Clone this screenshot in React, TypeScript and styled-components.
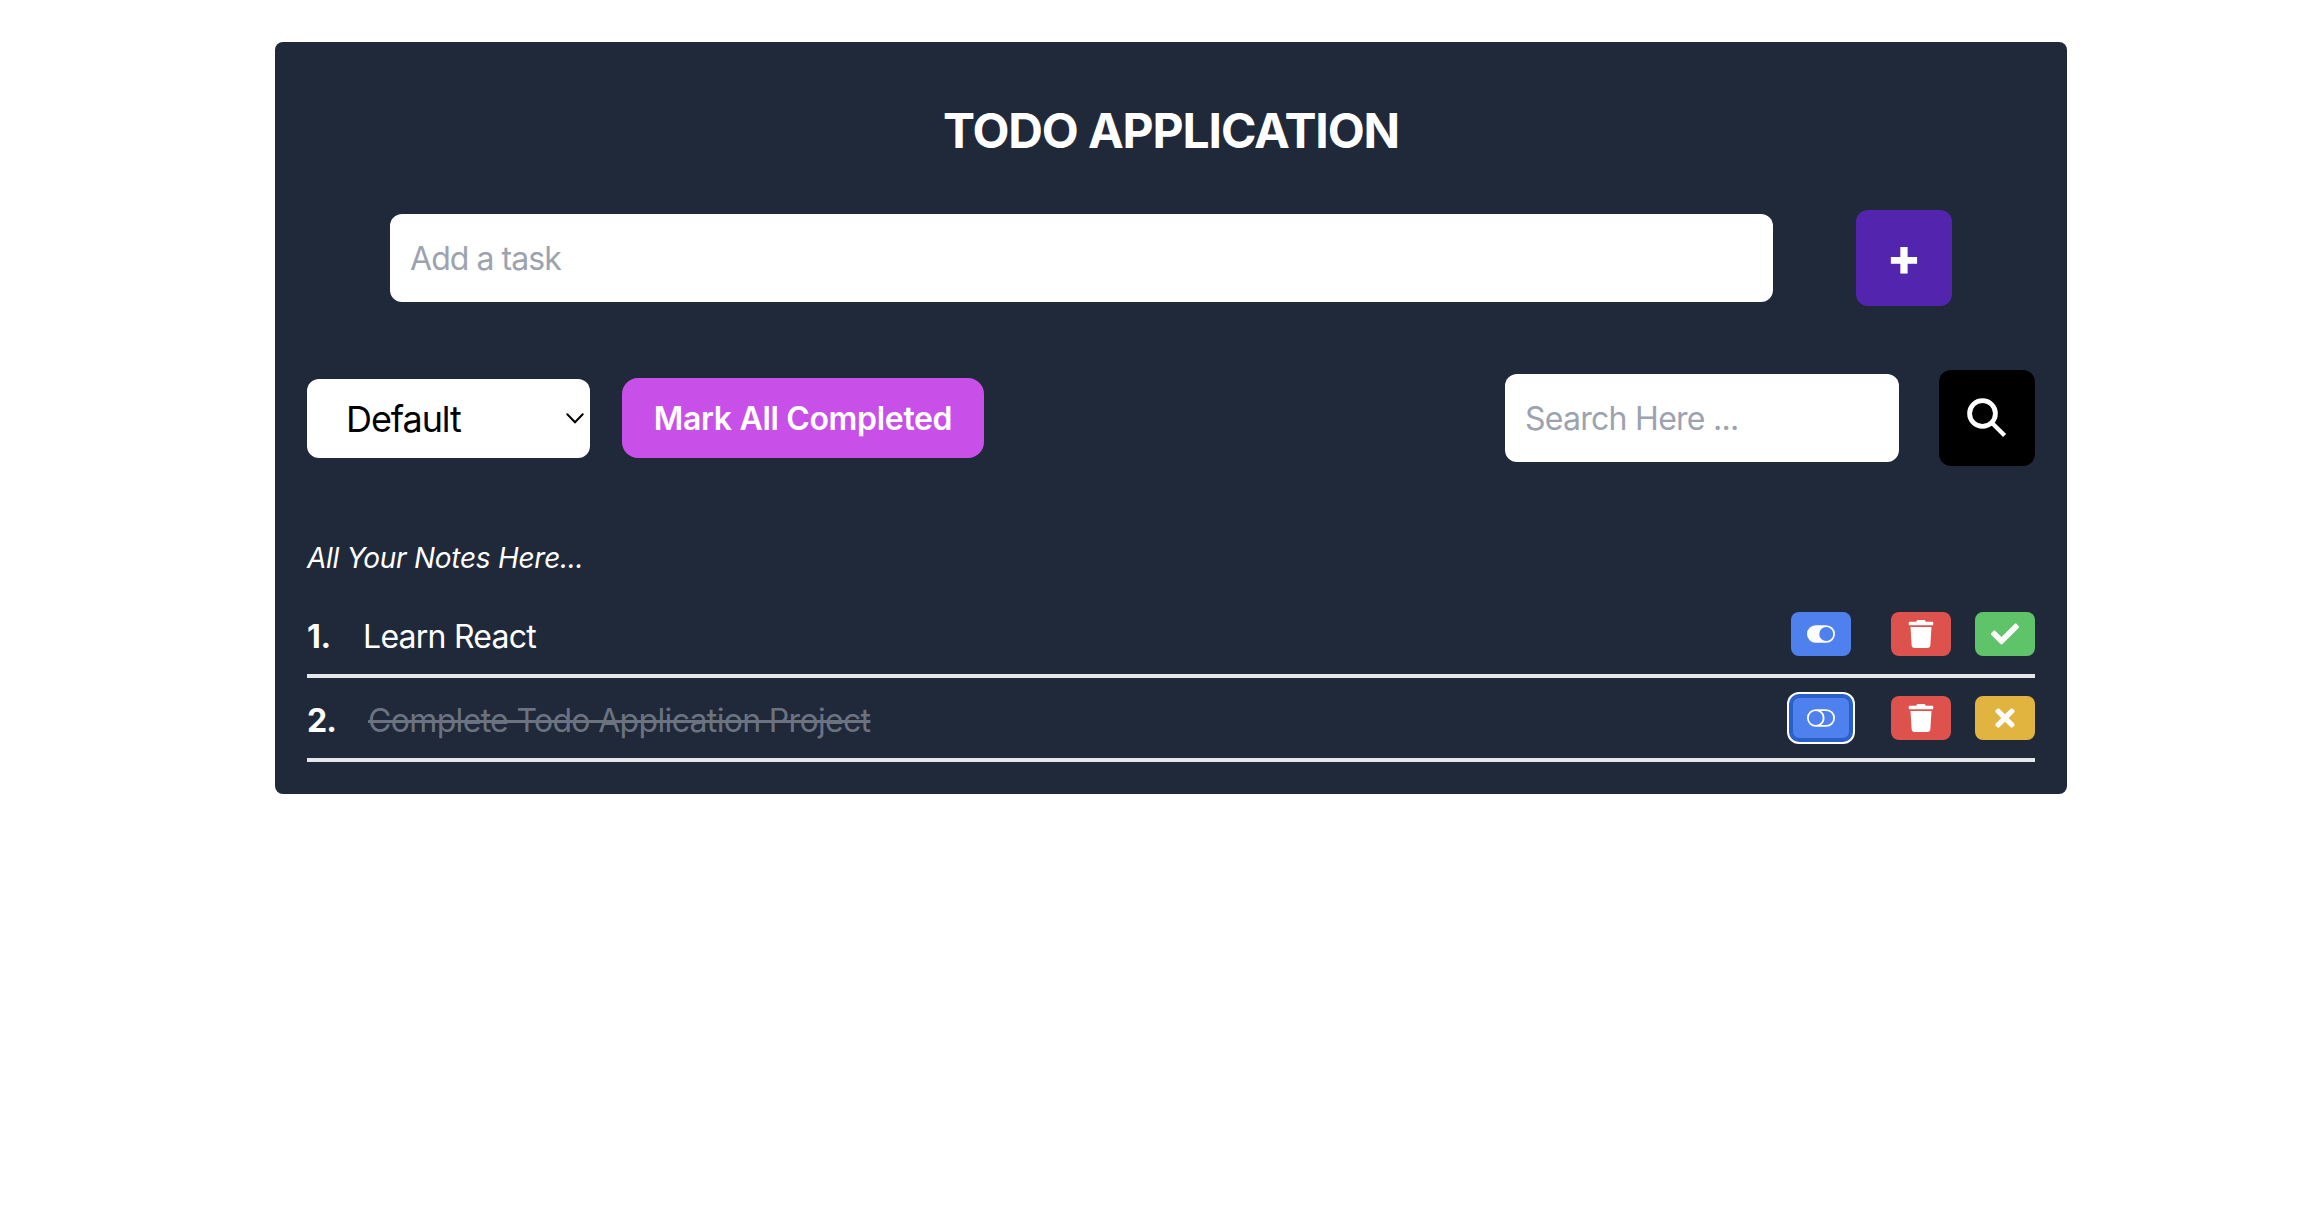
import React, { useState } from 'react';
import styled, { createGlobalStyle, css } from 'styled-components';
import { BsToggleOff, BsToggleOn } from 'react-icons/bs';
import { FaCheck, FaTimes, FaTrash } from 'react-icons/fa';

const GlobalStyle = createGlobalStyle`
  *, *::before, *::after { box-sizing: border-box; }
  body { margin: 0; background: #ffffff; font-family: Inter, 'Liberation Sans', sans-serif; }
  button, input, select { font: inherit; color: inherit; border: 0; margin: 0; padding: 0; }
  button { cursor: pointer; }
`;

const Card = styled.main`
  width: 1792px;
  height: 752px;
  margin: 42px 0 0 275px;
  padding: 61px 32px 32px;
  border-radius: 8px;
  background: #202939;
  color: #ffffff;
`;

const Title = styled.h1`
  margin: 0 0 51px;
  line-height: 56px;
  font-size: 48px;
  font-weight: 700;
  letter-spacing: -1.13px;
  text-align: center;
`;

const AddRow = styled.form`
  display: flex;
  align-items: center;
  justify-content: space-between;
  height: 96px;
  padding: 0 83px;
`;

const TextField = styled.input<{ $width: number; $tracking: number }>`
  width: ${(p) => p.$width}px;
  height: 88px;
  padding: 0 20px;
  border-radius: 12px;
  outline: none;
  background: #ffffff;
  color: #111827;
  font-size: 32px;
  letter-spacing: ${(p) => p.$tracking}px;
  &::placeholder { color: #9ca3af; opacity: 1; }
`;

const SquareButton = styled.button<{ $color: string }>`
  display: flex;
  align-items: center;
  justify-content: center;
  flex: none;
  width: 96px;
  height: 96px;
  border-radius: 12px;
  background: ${(p) => p.$color};
  color: #ffffff;
`;

const PlusSign = styled.span`
  padding-bottom: 2px;
  font-size: 51px;
  font-weight: 800;
  line-height: 60px;
`;

const Toolbar = styled.div`
  display: flex;
  align-items: center;
  justify-content: space-between;
  height: 96px;
  margin-top: 64px;
`;

const ToolGroup = styled.div<{ $gap: number }>`
  display: flex;
  align-items: center;
  gap: ${(p) => p.$gap}px;
`;

const SelectBox = styled.div`
  position: relative;
  width: 283px;
  height: 79px;
  margin-top: 1px;
`;

const Select = styled.select`
  appearance: none;
  width: 100%;
  height: 100%;
  padding-left: 39px;
  border-radius: 12px;
  background: #ffffff;
  color: #000000;
  font-size: 36px;
  letter-spacing: -1.08px;
  outline: none;
`;

const Chevron = styled.svg`
  position: absolute;
  top: 34px;
  right: 6px;
  width: 18px;
  height: 11px;
  pointer-events: none;
`;

const MarkAllButton = styled.button`
  width: 362px;
  height: 80px;
  border-radius: 16px;
  background: #c850e8;
  font-size: 32px;
  font-weight: 600;
  letter-spacing: -0.33px;
`;

const Caption = styled.p`
  margin: 74px 0 0;
  line-height: 36px;
  font-size: 28px;
  font-style: italic;
  letter-spacing: -0.27px;
`;

const List = styled.ul`
  margin: 18px 0 0;
  padding: 0;
  list-style: none;
`;

const Row = styled.li`
  display: flex;
  align-items: center;
  height: 84px;
  padding: 16px 0;
  border-bottom: 4px solid #e5e7eb;
`;

const TaskNumber = styled.span<{ $tracking: number }>`
  padding-top: 4px;
  font-size: 32px;
  font-weight: 700;
  letter-spacing: ${(p) => p.$tracking}px;
`;

const TaskText = styled.span<{ $done: boolean }>`
  margin-left: 32px;
  padding-top: 4px;
  font-size: 32px;
  letter-spacing: -0.78px;
  ${(p) =>
    p.$done &&
    css`
      color: #6b7280;
      letter-spacing: -0.67px;
      text-decoration: line-through;
      text-decoration-thickness: 3px;
    `}
`;

const Actions = styled.div`
  display: flex;
  margin-left: auto;
`;

const ActionButton = styled.button<{ $color: string; $space?: number; $focused?: boolean }>`
  display: flex;
  align-items: center;
  justify-content: center;
  width: 60px;
  height: 44px;
  margin-left: ${(p) => p.$space ?? 0}px;
  border-radius: 8px;
  background: ${(p) => p.$color};
  color: #ffffff;
  font-size: 28px;
  outline: none;
  ${(p) =>
    p.$focused &&
    css`
      box-shadow: inset 0 0 0 2px #285fc8, 0 0 0 2px #285fc8, 0 0 0 4px #ffffff;
    `}
`;

const SearchIcon = () => (
  <svg width="40" height="40" viewBox="0 0 40 40" fill="none" stroke="currentColor">
    <circle cx="15.5" cy="15.5" r="12.9" strokeWidth="4.8" />
    <path d="M24.3 24.3 37.6 37.6" strokeWidth="4.3" />
  </svg>
);

interface Task {
  text: string;
  done: boolean;
  tracking: number;
}

const initialTasks: Task[] = [
  { text: 'Learn React', done: false, tracking: -0.2 },
  { text: 'Complete Todo Application Project', done: true, tracking: -0.9 },
];

export default function App() {
  const [tasks, setTasks] = useState(initialTasks);
  const [focused, setFocused] = useState(1);

  const toggle = (index: number) => {
    setFocused(index);
    setTasks(tasks.map((t, i) => (i === index ? { ...t, done: !t.done } : t)));
  };

  return (
    <>
      <GlobalStyle />
      <Card>
        <Title>TODO APPLICATION</Title>
        <AddRow onSubmit={(e) => e.preventDefault()}>
          <TextField $width={1383} $tracking={-0.95} placeholder="Add a task" />
          <SquareButton $color="#5325af" type="submit">
            <PlusSign>+</PlusSign>
          </SquareButton>
        </AddRow>
        <Toolbar>
          <ToolGroup $gap={32}>
            <SelectBox>
              <Select defaultValue="Default">
                <option>Default</option>
              </Select>
              <Chevron viewBox="0 0 18 11" fill="none" stroke="#000000" strokeWidth="2">
                <path d="M1.3 1.3 9 9.2 16.7 1.3" strokeLinecap="round" />
              </Chevron>
            </SelectBox>
            <MarkAllButton onClick={() => setTasks(tasks.map((t) => ({ ...t, done: true })))}>
              Mark All Completed
            </MarkAllButton>
          </ToolGroup>
          <ToolGroup $gap={40}>
            <TextField $width={394} $tracking={-0.73} placeholder="Search Here ..." />
            <SquareButton $color="#000000">
              <SearchIcon />
            </SquareButton>
          </ToolGroup>
        </Toolbar>
        <Caption>All Your Notes Here...</Caption>
        <List>
          {tasks.map((task, i) => (
            <Row key={task.text}>
              <TaskNumber $tracking={task.tracking}>{i + 1}.</TaskNumber>
              <TaskText $done={task.done}>{task.text}</TaskText>
              <Actions>
                <ActionButton $color="#4f81ee" $focused={i === focused} onClick={() => toggle(i)}>
                  {task.done ? <BsToggleOff /> : <BsToggleOn />}
                </ActionButton>
                <ActionButton
                  $color="#dd524c"
                  $space={40}
                  onClick={() => setTasks(tasks.filter((_, j) => j !== i))}
                >
                  <FaTrash />
                </ActionButton>
                <ActionButton
                  $color={task.done ? '#e1b43f' : '#5fc36a'}
                  $space={24}
                  onClick={() => toggle(i)}
                >
                  {task.done ? <FaTimes /> : <FaCheck />}
                </ActionButton>
              </Actions>
            </Row>
          ))}
        </List>
      </Card>
    </>
  );
}
